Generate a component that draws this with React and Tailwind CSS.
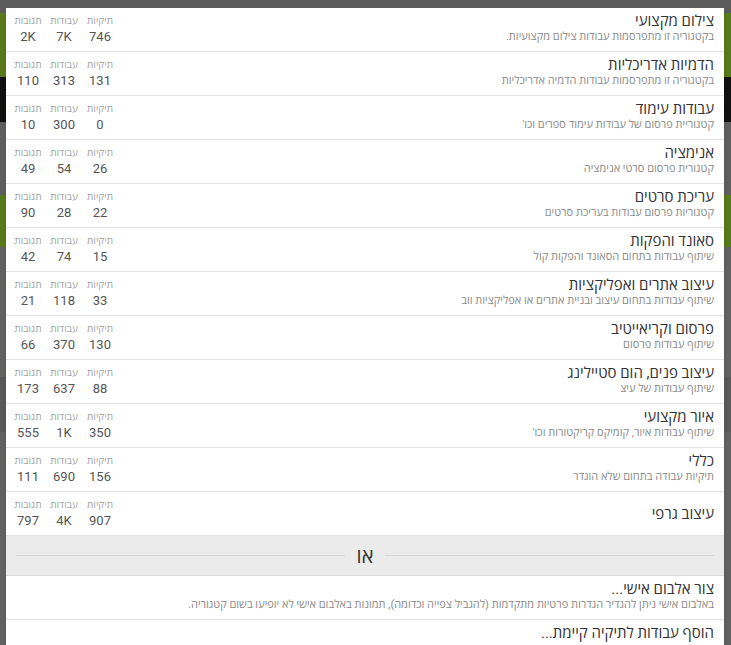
import React from "react";

const categories = [
  { title: "צילום מקצועי", desc: "בקטגוריה זו מתפרסמות עבודות צילום מקצועיות.", folders: "746", works: "7K", comments: "2K" },
  { title: "הדמיות אדריכליות", desc: "בקטגוריה זו מתפרסמות עבודות הדמיה אדריכליות", folders: "131", works: "313", comments: "110" },
  { title: "עבודות עימוד", desc: "קטגוריית פרסום של עבודות עימוד ספרים וכו'", folders: "0", works: "300", comments: "10" },
  { title: "אנימציה", desc: "קטגורית פרסום סרטי אנימציה", folders: "26", works: "54", comments: "49" },
  { title: "עריכת סרטים", desc: "קטגוריות פרסום עבודות בעריכת סרטים", folders: "22", works: "28", comments: "90" },
  { title: "סאונד והפקות", desc: "שיתוף עבודות בתחום הסאונד והפקות קול", folders: "15", works: "74", comments: "42" },
  { title: "עיצוב אתרים ואפליקציות", desc: "שיתוף עבודות בתחום עיצוב ובניית אתרים או אפליקציות ווב", folders: "33", works: "118", comments: "21" },
  { title: "פרסום וקריאייטיב", desc: "שיתוף עבודות פרסום", folders: "130", works: "370", comments: "66" },
  { title: "עיצוב פנים, הום סטיילינג", desc: "שיתוף עבודות של עיצ", folders: "88", works: "637", comments: "173" },
  { title: "איור מקצועי", desc: "שיתוף עבודות איור, קומיקס קריקטורות וכו'", folders: "350", works: "1K", comments: "555" },
  { title: "כללי", desc: "תיקיות עבודה בתחום שלא הוגדר", folders: "156", works: "690", comments: "111" },
  { title: "עיצוב גרפי", desc: "", folders: "907", works: "4K", comments: "797" },
];

function Stat({ label, value }) {
  return (
    <div className="w-9 text-center">
      <div className="text-[10px] leading-[14px] text-[#a3a3a3]">{label}</div>
      <div className="text-[13px] leading-[18px] text-[#555]">{value}</div>
    </div>
  );
}

function CategoryRow({ item }) {
  return (
    <div className="flex h-[44px] justify-between border-b border-[#e3e3e3] pl-[4px] pr-[10px]">
      <div className={item.desc ? "pt-[5px]" : "flex items-center"}>
        <div className="text-[15px] leading-[16px] text-[#333]">{item.title}</div>
        {item.desc && <div className="text-[11px] leading-[16px] text-[#8a8a8a]">{item.desc}</div>}
      </div>
      <div className="flex pt-[6px]">
        <Stat label="תיקיות" value={item.folders} />
        <Stat label="עבודות" value={item.works} />
        <Stat label="תגובות" value={item.comments} />
      </div>
    </div>
  );
}

function ActionRow({ title, desc }) {
  return (
    <div className="h-[44px] border-b border-[#e3e3e3] px-[10px] pt-[5px]">
      <div className="text-[15px] leading-[16px] text-[#333]">{title}</div>
      <div className="text-[11px] leading-[16px] text-[#8a8a8a]">{desc}</div>
    </div>
  );
}

export default function App() {
  return (
    <div
      className="relative h-[645px] w-[731px] overflow-hidden bg-[#5c5c5c]"
      style={{ fontFamily: "Roboto, 'Open Sans', 'Liberation Sans', sans-serif" }}
    >
      {/* page behind the backdrop */}
      <div className="flex flex-col">
        <div className="h-[13px] bg-[#5c5c5c]" />
        <div className="h-[64px] bg-[#587a1b]" />
        <div className="h-[45px] bg-[#111]" />
        <div className="h-[73px] bg-[#5f5f5f]" />
        <div className="h-[52px] bg-[#587a1b]" />
        <div className="h-[130px] bg-[#626262]" />
        <div className="h-[55px] bg-[#5a5a5a]" />
        <div className="h-[213px] bg-[#626262]" />
      </div>

      {/* modal */}
      <div dir="rtl" className="absolute left-[6px] top-[8px] w-[718px] bg-white shadow-md">
        {categories.map((c) => (
          <CategoryRow key={c.title} item={c} />
        ))}
        <div className="flex h-[40px] items-center gap-3 border-b border-[#dcdcdc] bg-[#ebebeb] px-[10px]">
          <div className="h-px flex-1 bg-[#d6d6d6]" />
          <div className="text-[20px] leading-[20px] text-[#333]">או</div>
          <div className="h-px flex-1 bg-[#d6d6d6]" />
        </div>
        <ActionRow
          title="צור אלבום אישי..."
          desc="באלבום אישי ניתן להגדיר הגדרות פרטיות מתקדמות (להגביל צפייה וכדומה), תמונות באלבום אישי לא יופיעו בשום קטגוריה."
        />
        <ActionRow title="הוסף עבודות לתיקיה קיימת..." desc="" />
      </div>
    </div>
  );
}
